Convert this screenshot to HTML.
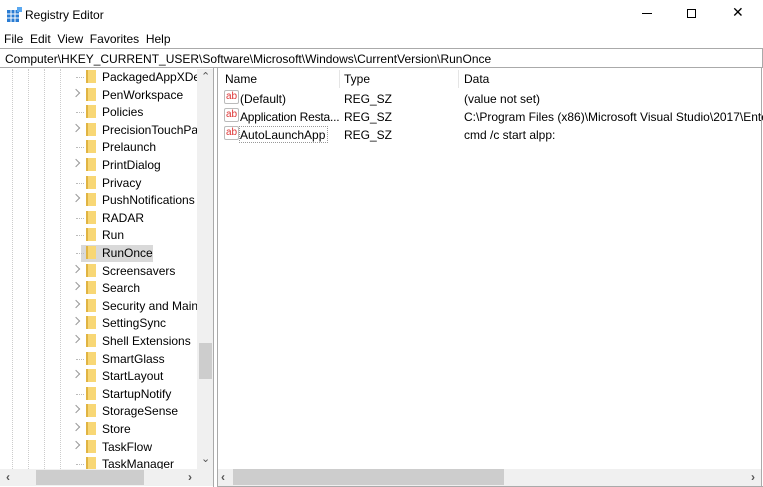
<!DOCTYPE html>
<html><head><meta charset="utf-8"><style>
*{margin:0;padding:0;box-sizing:border-box}
body{width:763px;height:487px;background:#fff;font-family:"Liberation Sans",sans-serif;font-size:12px;color:#000;position:relative;overflow:hidden}
.a{position:absolute;white-space:nowrap}
.row{position:absolute;left:0;height:18px;width:197px;white-space:nowrap}
.row .t{position:absolute;left:102px;top:2px;white-space:nowrap}
.fold{position:absolute;left:86px;top:2px;width:10px;height:13px;background:#f8d775;border-left:2px solid #e0b443}
.chev{position:absolute;left:73px;top:4px;width:6px;height:6px;border-right:1.5px solid #999;border-top:1.5px solid #999;transform:rotate(45deg)}
.dash{position:absolute;left:76px;top:9px;width:8px;border-top:1px dotted #bbb}
.vl{position:absolute;top:69px;height:400px;border-left:1px dotted #ccc}
.ab{position:absolute;width:15px;height:14px;border:1px solid #bbb;border-radius:2px;color:#d33;font-size:10px;line-height:11px;text-align:center;background:#fff}
</style></head><body>
<svg class="a" style="left:7px;top:7px" width="16" height="16"><rect x="0" y="3" width="12" height="12" fill="#2a7cd3"/><g stroke="#fff" stroke-width="1"><line x1="0" y1="7" x2="12" y2="7"/><line x1="0" y1="11" x2="12" y2="11"/><line x1="4" y1="3" x2="4" y2="15"/><line x1="8" y1="3" x2="8" y2="15"/></g><rect x="10" y="0" width="5" height="5" fill="#5aa8f0"/></svg>
<div class="a" style="left:25px;top:8px;font-size:12px">Registry Editor</div>
<div class="a" style="left:642px;top:13px;width:10px;border-top:1px solid #000"></div>
<div class="a" style="left:687px;top:9px;width:9px;height:9px;border:1px solid #000"></div>
<div class="a" style="left:732px;top:4px;font-size:14px">✕</div>
<div class="a" style="left:4px;top:32px">File&nbsp; Edit&nbsp; View&nbsp; Favorites&nbsp; Help</div>
<div class="a" style="left:0;top:48px;width:763px;height:20px;border-top:1px solid #aaa;border-bottom:1px solid #aaa;border-right:1px solid #aaa"></div>
<div class="a" style="left:5px;top:52px">Computer\HKEY_CURRENT_USER\Software\Microsoft\Windows\CurrentVersion\RunOnce</div>
<div class="vl" style="left:12px"></div><div class="vl" style="left:28px"></div><div class="vl" style="left:44px"></div><div class="vl" style="left:60px"></div>
<div class="a" style="left:81px;top:245px;width:72px;height:17px;background:#d9d9d9"></div>
<div id="tree"></div>
<div class="a" style="left:197px;top:69px;width:16px;height:400px;background:#f0f0f0"></div>
<div class="a" style="left:199px;top:343px;width:13px;height:36px;background:#cdcdcd"></div>
<div class="a" style="left:201px;top:70px;color:#555;font-size:11px">⌃</div>
<div class="a" style="left:201px;top:452px;color:#555;font-size:11px">⌄</div>
<div class="a" style="left:0;top:469px;width:213px;height:17px;background:#f0f0f0"></div>
<div class="a" style="left:36px;top:470px;width:108px;height:15px;background:#cdcdcd"></div>
<div class="a" style="left:6px;top:470px;color:#555;font-size:12px;font-weight:bold">‹</div>
<div class="a" style="left:188px;top:470px;color:#555;font-size:12px;font-weight:bold">›</div>
<div class="a" style="left:213px;top:68px;width:1px;height:419px;background:#aaa"></div>
<div class="a" style="left:217px;top:68px;width:1px;height:419px;background:#aaa"></div>
<div class="a" style="left:761px;top:68px;width:1px;height:419px;background:#aaa"></div>
<div class="a" style="left:217px;top:486px;width:546px;height:1px;background:#aaa"></div>
<div class="a" style="left:225px;top:72px">Name</div>
<div class="a" style="left:339px;top:70px;width:1px;height:18px;background:#e5e5e5"></div>
<div class="a" style="left:344px;top:72px">Type</div>
<div class="a" style="left:458px;top:70px;width:1px;height:18px;background:#e5e5e5"></div>
<div class="a" style="left:464px;top:72px">Data</div>
<div class="ab" style="left:224px;top:90px">ab</div><div class="a" style="left:240px;top:92px">(Default)</div><div class="a" style="left:344px;top:92px">REG_SZ</div><div class="a" style="left:464px;top:92px">(value not set)</div>
<div class="ab" style="left:224px;top:108px">ab</div><div class="a" style="left:240px;top:110px;letter-spacing:-0.2px">Application Resta...</div><div class="a" style="left:344px;top:110px">REG_SZ</div><div class="a" style="left:464px;top:110px">C:\Program Files (x86)\Microsoft Visual Studio\2017\Ente</div>
<div class="ab" style="left:224px;top:126px">ab</div><div class="a" style="left:239px;top:126px;width:89px;height:17px;border:1px dotted #999"></div><div class="a" style="left:240px;top:128px">AutoLaunchApp</div><div class="a" style="left:344px;top:128px">REG_SZ</div><div class="a" style="left:464px;top:128px">cmd /c start alpp:</div>
<div class="a" style="left:218px;top:469px;width:543px;height:17px;background:#f0f0f0"></div>
<div class="a" style="left:233px;top:469px;width:271px;height:16px;background:#cdcdcd"></div>
<div class="a" style="left:221px;top:470px;color:#555;font-size:12px;font-weight:bold">‹</div>
<div class="a" style="left:751px;top:470px;color:#555;font-size:12px;font-weight:bold">›</div>
<script>
var items=[["PackagedAppXDel",0],["PenWorkspace",1],["Policies",0],["PrecisionTouchPad",1],["Prelaunch",0],["PrintDialog",1],["Privacy",0],["PushNotifications",1],["RADAR",0],["Run",0],["RunOnce",0],["Screensavers",1],["Search",1],["Security and Maint",1],["SettingSync",1],["Shell Extensions",1],["SmartGlass",0],["StartLayout",1],["StartupNotify",0],["StorageSense",1],["Store",1],["TaskFlow",1],["TaskManager",0]];
var h="";items.forEach(function(it,i){var y=68+i*17.6;h+='<div class="row" style="top:'+y+'px;overflow:hidden">'+(it[1]?'<span class="chev"></span>':'<span class="dash"></span>')+'<span class="fold"></span><span class="t">'+it[0]+'</span></div>';});
document.getElementById("tree").innerHTML=h;
</script>
</body></html>
